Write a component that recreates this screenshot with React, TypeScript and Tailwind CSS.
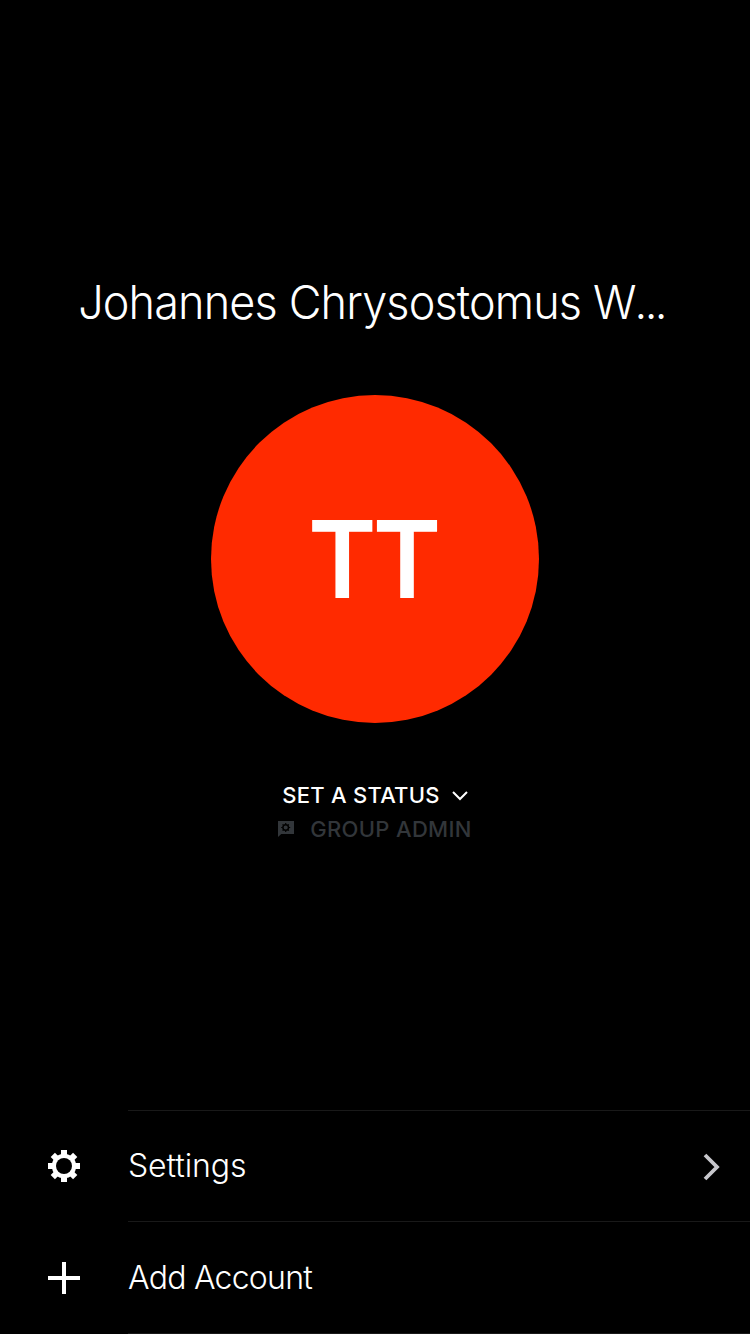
import React from 'react';

function GearIcon() {
  return (
    <svg width="32" height="32" viewBox="-16 -16 32 32" fill="#fff" aria-hidden="true">
      {[0, 45, 90, 135].map((angle) => (
        <rect
          key={angle}
          x="-3"
          y={angle % 90 === 0 ? -16 : -15.8}
          width="6"
          height={angle % 90 === 0 ? 32 : 31.6}
          transform={`rotate(${angle})`}
        />
      ))}
      <circle r="12.2" />
      <circle r="8" fill="#000" />
    </svg>
  );
}

function PlusIcon() {
  return (
    <svg width="32" height="32" viewBox="0 0 32 32" fill="#fff" aria-hidden="true">
      <path d="M14 0h4v14h14v4H18v14h-4V18H0v-4h14z" />
    </svg>
  );
}

function AdminIcon() {
  return (
    <svg width="16" height="16" viewBox="0 0 16 16" aria-hidden="true">
      <path d="M0 0h16v13H3.2L0 16z" fill="#32363a" />
      <g transform="translate(7.7 6.5)" stroke="#000" fill="none">
        <circle r="2.8" strokeWidth="1.5" />
        <path d="M0-4.5v1.5M0 3v1.5M-4.5 0h1.5M3 0h1.5M-3.1-3.1l1 1M2.1 2.1l1 1M-3.1 3.1l1-1M2.1-2.1l1-1" strokeWidth="1.2" />
      </g>
    </svg>
  );
}

type RowProps = {
  icon: React.ReactNode;
  label: string;
  labelClass: string;
  iconClass: string;
  height: string;
  chevron?: boolean;
};

function MenuRow({ icon, label, labelClass, iconClass, height, chevron }: RowProps) {
  return (
    <button className={`flex w-full items-stretch pl-12 text-left ${height}`}>
      <span className={`flex w-20 items-start ${iconClass}`}>{icon}</span>
      <span className="flex flex-1 items-start border-t border-[#191919]">
        <span className={`flex flex-1 items-center whitespace-nowrap text-[32px] font-light ${labelClass}`}>
          {label}
        </span>
        {chevron && (
          <svg className="mt-[42px] mr-7" width="20" height="28" viewBox="0 0 20 28" fill="none" aria-hidden="true">
            <path d="M3 2L15 14L3 26" stroke="#c7c7cc" strokeWidth="3.8" />
          </svg>
        )}
      </span>
    </button>
  );
}

export default function App() {
  return (
    <main className="flex h-[1334px] w-[750px] flex-col overflow-hidden bg-black font-['Inter',sans-serif] text-white">
      <header className="flex h-[1110px] flex-col items-center pt-[272px]">
        <h1 className="mr-[7px] h-[60px] scale-x-[0.957] whitespace-nowrap text-[47px] leading-[60px] font-light tracking-[-0.9px]">
          Johannes Chrysostomus W<span className="-ml-px tracking-[-2.8px]">...</span>
        </h1>
        <div className="mt-[63px] flex size-[328px] items-center justify-center rounded-full bg-[#ff2a00]">
          <span className="mr-[5px] scale-x-[0.97] text-[107px] leading-none font-semibold tracking-[-3.9px]">TT</span>
        </div>
        <button className="mt-[55px] flex h-[34px] items-center gap-3 text-[22px] leading-[34px] font-medium tracking-[0.25px] whitespace-nowrap">
          SET A STATUS
          <svg className="mt-px" width="16" height="10" viewBox="0 0 16 10" fill="none" aria-hidden="true">
            <path d="M1 1L8 8L15 1" stroke="#fff" strokeWidth="2" />
          </svg>
        </button>
        <div className="flex h-[34px] items-center gap-4 text-[22px] leading-[34px] font-medium tracking-[0.33px] whitespace-nowrap text-[#32363a]">
          <AdminIcon />
          GROUP ADMIN
        </div>
      </header>
      <nav>
        <MenuRow icon={<GearIcon />} label="Settings" labelClass="h-[110px] tracking-[-0.1px]" iconClass="pt-10" height="h-[111px]" chevron />
        <MenuRow icon={<PlusIcon />} label="Add Account" labelClass="h-[112px] tracking-[-0.75px]" iconClass="pt-[41px]" height="h-[112px]" />
        <div className="ml-32 h-px bg-[#191919]" />
      </nav>
    </main>
  );
}
